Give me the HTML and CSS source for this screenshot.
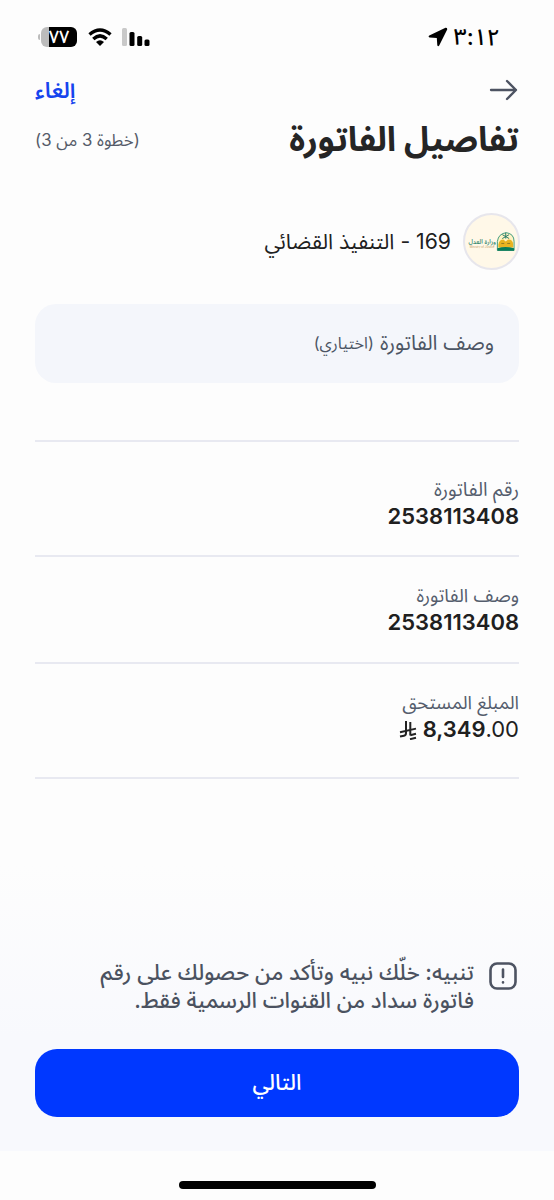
FILE: index.html
```
<!DOCTYPE html>
<html lang="ar" dir="rtl">
<head>
<meta charset="utf-8">
<title>تفاصيل الفاتورة</title>
<link rel="stylesheet" href="styles.css">
</head>
<body>
<div class="screen">
  <header class="status">
    <div class="clock">
      <span class="time">٣:١٢</span>
      <svg class="location" viewBox="0 0 20 20"><path d="M17.500.8 1.300 8.600Q-.2 9.700 1.600 10.400L8.800 11l.5 7.300q.8 1.600 1.900.2L19.200 2.400q.2-1.800-1.700-1.600z"/></svg>
    </div>
    <div class="indicators">
      <svg class="signal" viewBox="0 0 28 18"><rect x="0" y="0" width="5" height="18" rx="1.500" fill="#c9c9c9"/><rect x="7.500" y="4" width="5" height="14" rx="1.500"/><rect x="15.200" y="8" width="5" height="10" rx="1.500"/><rect x="22.500" y="11.500" width="5" height="6.500" rx="1.500"/></svg>
      <svg class="wifi" viewBox="0 0 24 18"><g fill="none" stroke="#000" stroke-width="3.400"><path d="M1.500 6.500Q12-2.700 22.500 6.500"/><path d="M5.300 11Q12 4.800 18.700 11"/></g><path d="M8 14q4-3.500 8 0l-4 4z"/></svg>
      <div class="battery"><span class="charge">٧٧</span></div>
    </div>
  </header>

  <nav class="nav">
    <svg class="back" viewBox="0 0 30 22"><path d="M2 11h25M18 2l9 9-9 9"/></svg>
    <a class="cancel">إلغاء</a>
  </nav>

  <div class="heading">
    <h1 class="title">تفاصيل الفاتورة</h1>
    <span class="step">(خطوة 3 من 3)</span>
  </div>

  <div class="biller">
    <div class="logo">
      <svg viewBox="0 0 54 54">
        <path d="M33 27q1-8 9-9 8 1 8 9v9H33z" fill="#fff3c5" stroke="#2c9275" stroke-width=".9"/>
        <path d="M41.500 18v6M38 20l7 4m0-4-7 4" stroke="#287b68" stroke-width="1"/>
        <path d="M34 30q1-5 5-5l2.500 2 2.500-2q5 0 5 5v3H34z" fill="#e9b322"/>
        <path d="M37 29h3m3 0h3" stroke="#967a20" stroke-width="1"/>
        <path d="M33 34q8-3 17 0v2.500H33z" fill="#087b58"/>
        <text class="logo-name" x="17.500" y="29.500" text-anchor="middle">وزارة العدل</text>
        <text class="logo-sub" x="17.500" y="34" text-anchor="middle" direction="ltr">Ministry of Justice</text>
      </svg>
    </div>
    <span class="biller-name">169 - التنفيذ القضائي</span>
  </div>

  <div class="field"><span class="field-label">وصف الفاتورة</span><span class="field-note">(اختياري)</span></div>

  <dl class="details">
    <div class="row"><dt class="label wide">رقم الفاتورة</dt><dd class="value">2538113408</dd></div>
    <div class="row short"><dt class="label">وصف الفاتورة</dt><dd class="value">2538113408</dd></div>
    <div class="row last"><dt class="label">المبلغ المستحق</dt><dd class="value amount" dir="ltr"><svg class="riyal" viewBox="0 0 18 20"><path d="M7 1v12q0 2.300-2 2.700L1 16.600M11.300 2v13.500M1 12.300l16-3.700M11.300 15.200l5.700-1.400M11 19.200l6-1.400"/></svg><span>8,349<span class="cents">.00</span></span></dd></div>
  </dl>

  <footer class="bottom">
    <div class="notice">
      <svg class="alert" viewBox="0 0 28 28"><rect x="1.500" y="1.500" width="25" height="25" rx="6.500"/><path d="M14 7.500v7.500M14 20.200v.2"/></svg>
      <p class="notice-text"><span>تنبيه: خلّك نبيه وتأكد من حصولك على رقم</span><span>فاتورة سداد من القنوات الرسمية فقط.</span></p>
    </div>
    <button class="next"><span>التالي</span></button>
  </footer>
  <div class="home"><span class="home-bar"></span></div>
</div>
</body>
</html>
```
FILE: styles.css
```
* { box-sizing: border-box; }
body { margin: 0; background: #fdfdfd; font-family: Inter, "Noto Sans Arabic", "DejaVu Sans", sans-serif; color: #202020; }
.screen { width: 554px; height: 1200px; display: flex; flex-direction: column; overflow: hidden; }
span, dt, dd, h1, a { white-space: nowrap; }
.status { height: 74px; padding: 0 54px 0 41px; display: flex; justify-content: space-between; align-items: center; }
.clock, .indicators { display: flex; align-items: center; }
.clock { gap: 6px; }
.time { font-size: 23px; font-weight: 500; letter-spacing: -0.8px; line-height: 34px; color: #000; }
.location { width: 20px; height: 20px; }
.indicators { gap: 10px; }
.signal { width: 28px; height: 18px; }
.wifi { width: 24px; height: 18px; }
.battery { width: 36px; height: 20px; border-radius: 6px; background: linear-gradient(to right, #bcbcbc 8px, #000 8px); color: #fff; position: relative; display: flex; align-items: center; justify-content: center; margin-right: 1px; }
.battery::before { content: ""; position: absolute; left: -3px; top: 7px; width: 2px; height: 6px; border-radius: 2px 0 0 2px; background: #bcbcbc; }
.charge { font-size: 18px; font-weight: 500; line-height: 20px; }
.nav { height: 32px; padding: 0 35px; display: flex; align-items: center; justify-content: space-between; }
.back { width: 30px; height: 22px; fill: none; stroke: #4d5362; stroke-width: 2.3; stroke-linecap: round; stroke-linejoin: round; }
.cancel { font-size: 22px; font-weight: 600; line-height: 30px; color: #1644ee; }
.heading { height: 68px; padding: 0 35px; display: flex; justify-content: space-between; align-items: center; }
.title { margin: 0; font-size: 34px; font-weight: 700; line-height: 60px; position: relative; top: -1px; color: #252525; }
.step { font-size: 16.8px; color: #555b68; }
.biller { margin-top: 38px; height: 58px; padding: 0 34px; display: flex; align-items: center; gap: 12px; }
.logo { width: 57px; height: 57px; border: 2px solid #e7e6ec; border-radius: 50%; background: #fff8e8; overflow: hidden; }
.logo svg { display: block; width: 53px; height: 53px; }
.logo-name { font-size: 6.4px; fill: #278168; font-weight: 500; }
.logo-sub { font-size: 2.9px; fill: #c49b66; }
.biller-name { font-size: 21.2px; line-height: 30px; }
.field { margin: 34px 35px 0; height: 79px; padding: 0 25px; border-radius: 21px; background: #f4f6fb; color: #4c5564; display: flex; align-items: center; gap: 6px; }
.field-label { font-size: 20.7px; }
.field-note { font-size: 16.2px; }
.details { margin: 57px 35px 0; border-top: 2px solid #e8e9f1; }
.row { height: 115px; padding-top: 34px; border-bottom: 2px solid #e8e9f1; }
.short { height: 107px; padding-top: 25px; }
.last { height: 115px; padding-top: 25px; }
.label { height: 27px; line-height: 27px; font-size: 18.6px; color: #555d6d; }
.wide { font-size: 19.3px; }
.value { margin: 0; height: 27px; line-height: 27px; font-size: 22px; font-weight: 600; }
.amount { display: flex; justify-content: flex-end; align-items: center; gap: 6px; }
.cents { font-weight: 400; }
.riyal { width: 18px; height: 20px; fill: none; stroke: #222; stroke-width: 2; }
.bottom { margin-top: auto; height: 285px; padding: 92px 35px 0; background: linear-gradient(#fdfdfd, #f8f9fd 60%); }
.notice { display: flex; gap: 15px; height: 92px; padding-right: 2px; }
.alert { width: 28px; height: 28px; margin-top: 4px; flex: none; fill: none; stroke: #4d5362; stroke-width: 2.6; stroke-linecap: round; }
.notice-text { margin: 0; font-size: 21.9px; font-weight: 500; line-height: 28px; color: #4b5260; display: flex; flex-direction: column; align-items: flex-start; }
.next { width: 100%; height: 68px; margin-top: -1px; border: 0; border-radius: 22px; background: #0038ff; color: #fff; font: 500 22px Inter, "Noto Sans Arabic", "DejaVu Sans", sans-serif; display: flex; align-items: center; justify-content: center; }
.home { height: 49px; flex: none; display: flex; justify-content: center; align-items: flex-end; padding-bottom: 11px; }
.home-bar { width: 197px; height: 8px; border-radius: 4px; background: #000; }
```
